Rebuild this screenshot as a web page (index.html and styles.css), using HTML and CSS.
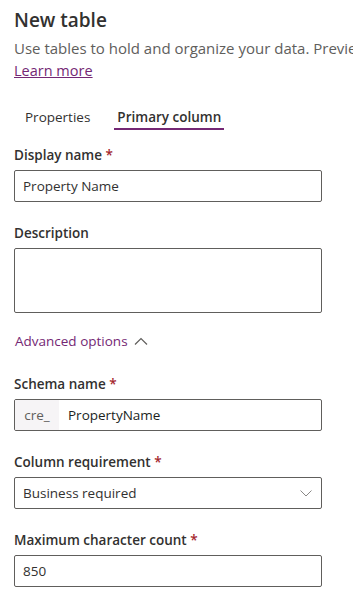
FILE: index.html
```html
<!DOCTYPE html>
<html lang="en">
<head>
<meta charset="utf-8">
<title>New table</title>
<link rel="stylesheet" href="styles.css">
</head>
<body>
<div class="panel">
  <h1 class="title">New table</h1>
  <p class="desc">Use tables to hold and organize your data. Preview the table below before you save it.</p>
  <a class="learn" href="#">Learn more</a>

  <div class="tabs">
    <span class="tab">Properties</span>
    <span class="tab active">Primary column</span>
  </div>

  <div class="form">
    <div class="field">
      <label class="label">Display name <span class="req">*</span></label>
      <div class="input"><span class="val">Property Name</span></div>
    </div>
    <div class="field">
      <label class="label">Description</label>
      <div class="input textarea"></div>
    </div>

    <div class="advanced">
      <span>Advanced options</span>
      <svg class="chev-up" width="14" height="8" viewBox="0 0 14 8"><path d="M1 7.5 L7 1.5 L13 7.5" fill="none" stroke="#605e5c" stroke-width="1.2"/></svg>
    </div>

    <div class="field">
      <label class="label">Schema name <span class="req">*</span></label>
      <div class="input prefixed"><span class="prefix">cre_</span><span class="val dark">PropertyName</span></div>
    </div>
    <div class="field">
      <label class="label">Column requirement <span class="req">*</span></label>
      <div class="input select"><span class="val">Business required</span>
        <svg class="chev-down" width="12" height="7" viewBox="0 0 12 7"><path d="M0.5 0.5 L6 6 L11.5 0.5" fill="none" stroke="#8a8886" stroke-width="1"/></svg>
      </div>
    </div>
    <div class="field">
      <label class="label">Maximum character count <span class="req">*</span></label>
      <div class="input"><span class="val">850</span></div>
    </div>
  </div>
</div>
</body>
</html>
```
FILE: styles.css
```css
html, body {
  margin: 0;
  padding: 0;
  background: #ffffff;
  overflow: hidden;
}
body {
  font-family: "Open Sans", "Noto Sans", sans-serif;
  color: #323130;
}
.panel {
  padding: 6px 0 0 14px;
}
.title {
  margin: 0;
  font-size: 19px;
  font-weight: 600;
  line-height: 28px;
  color: #323130;
}
.desc {
  margin: 4px 0 0 0;
  font-size: 15px;
  line-height: 20px;
  color: #605e5c;
  white-space: nowrap;
  overflow: hidden;
  width: 339px;
}
.learn {
  display: inline-block;
  margin-top: 3px;
  font-size: 14.5px;
  line-height: 20px;
  color: #742774;
  text-decoration: underline;
}
.tabs {
  display: flex;
  gap: 21px;
  margin: 26px 0 0 8px;
}
.tab {
  font-size: 13.5px;
  line-height: 20px;
  padding: 0 3px 1px;
  color: #323130;
  border-bottom: 2px solid transparent;
}
.tab.active {
  font-weight: 600;
  border-bottom-color: #742774;
}
.form {
  width: 308px;
  margin-top: 15px;
}
.field {
  margin-bottom: 21px;
}
.label {
  display: block;
  font-size: 13.5px;
  font-weight: 600;
  line-height: 20px;
  margin-bottom: 5px;
  color: #323130;
}
.req {
  color: #a4262c;
}
.input {
  box-sizing: border-box;
  height: 32px;
  border: 1px solid #605e5c;
  border-radius: 2px;
  display: flex;
  align-items: center;
  padding-left: 8px;
  font-size: 13.5px;
  color: #323130;
}
.input.textarea {
  height: 65px;
}
.advanced {
  display: flex;
  align-items: center;
  gap: 6px;
  font-size: 13.5px;
  line-height: 20px;
  color: #742774;
  margin: -3px 0 23px 1px;
}
.chev-up {
  margin-top: -1px;
}
.input.prefixed {
  padding-left: 0;
  overflow: hidden;
}
.prefix {
  align-self: stretch;
  display: flex;
  align-items: center;
  background: #f6f4f6;
  color: #605e5c;
  padding: 0 10px;
  width: 24px;
  margin-right: 9px;
  justify-content: center;
}
.val.dark {
  color: #201f1e;
}
.input.select {
  justify-content: space-between;
  padding-right: 9px;
}
```
